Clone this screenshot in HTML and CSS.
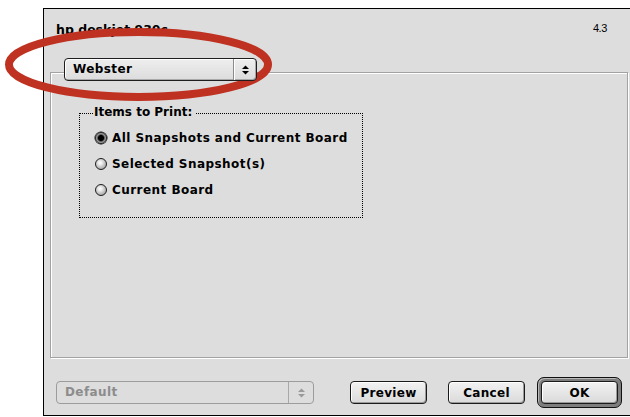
FILE: index.html
```html
<!DOCTYPE html>
<html lang="en">
<head>
<meta charset="utf-8">
<title>hp deskjet 930c</title>
<link rel="stylesheet" href="styles.css">
</head>
<body>
<div class="screen">
  <div class="window">
    <div class="head">
      <div class="title-row">
        <span class="title">hp deskjet 930c</span>
        <span class="version">4.3</span>
      </div>
      <div class="popup popup-main">
        <span class="popup-label">Webster</span>
        <span class="popup-arrows">
          <svg width="7" height="10" viewBox="0 0 7 10"><polygon points="0,4 3.5,0.5 7,4" fill="#000"/><polygon points="0,6 7,6 3.5,9.5" fill="#000"/></svg>
        </span>
      </div>
    </div>

    <div class="panel">
      <div class="group">
        <div class="group-title">Items to Print:</div>
        <div class="radio-list">
          <label class="radio-row"><span class="radio checked"></span><span class="radio-text">All Snapshots and Current Board</span></label>
          <label class="radio-row"><span class="radio"></span><span class="radio-text">Selected Snapshot(s)</span></label>
          <label class="radio-row"><span class="radio"></span><span class="radio-text">Current Board</span></label>
        </div>
      </div>
    </div>

    <div class="foot">
      <div class="popup popup-disabled">
        <span class="popup-label">Default</span>
        <span class="popup-arrows">
          <svg width="7" height="10" viewBox="0 0 7 10"><polygon points="0,4 3.5,0.5 7,4" fill="#9a9a9a"/><polygon points="0,6 7,6 3.5,9.5" fill="#9a9a9a"/></svg>
        </span>
      </div>
      <button class="btn btn-preview">Preview</button>
      <button class="btn btn-cancel">Cancel</button>
      <span class="default-ring"><button class="btn">OK</button></span>
    </div>
  </div>

  <!-- hand-drawn red circle marking the printer popup -->
  <svg class="mark" width="630" height="417" viewBox="0 0 630 417">
    <ellipse cx="138.5" cy="64.5" rx="129.5" ry="32.5" fill="none" stroke="#bf3120" stroke-width="8"/>
  </svg>
</div>
</body>
</html>
```
FILE: styles.css
```css
* { box-sizing: border-box; }

html, body {
  margin: 0;
  background: #fff;
}

body {
  font-family: "DejaVu Sans", "Liberation Sans", sans-serif;
  font-size: 12px;
  color: #000;
}

.screen {
  position: relative;
  width: 630px;
  height: 417px;
  overflow: hidden;
  background: #fff;
}

/* dialog window */
.window {
  margin: 8px 0 0 43px;
  width: 592px;
  height: 408px;
  border: 1px solid #000;
  border-right: none;
  background: #dddddd;
  display: flex;
  flex-direction: column;
}

.head {
  padding: 13px 28px 0 12px;
}

.title-row {
  display: flex;
  justify-content: space-between;
  align-items: flex-start;
  line-height: 15px;
}

.title {
  font-weight: bold;
  font-size: 12.5px;
}

.version {
  font-family: "Liberation Sans", sans-serif;
  font-size: 11px;
  line-height: 13px;
  letter-spacing: -0.4px;
}

/* popup menus */
.popup {
  display: flex;
  align-items: stretch;
  height: 23px;
  border-radius: 4px;
  font-weight: bold;
  letter-spacing: 0.4px;
}

.popup-main {
  position: relative;
  z-index: 1;
  width: 193px;
  margin: 21px 0 -9px 8px;
  border: 1px solid #1e1e1e;
  background: linear-gradient(#eeeeee, #dcdcdc);
  box-shadow: inset 1px 1px 0 #fff, inset -1px -1px 0 #a8a8a8;
}

.popup-label {
  flex: 1;
  padding-left: 8px;
  line-height: 21px;
}

.popup-arrows {
  width: 23px;
  display: flex;
  align-items: center;
  justify-content: center;
  border-left: 1px solid #8c8c8c;
  box-shadow: inset 1px 0 0 #fff;
}

.popup-disabled {
  width: 258px;
  border: 1px solid #9c9c9c;
  background: #dddddd;
  color: #8c8c8c;
}

.popup-disabled .popup-arrows {
  width: 25px;
  border-left-color: #a8a8a8;
  box-shadow: none;
}

/* etched content panel */
.panel {
  flex: none;
  height: 286px;
  margin: 0 7px 0 6px;
  padding: 40px 0 0 28px;
  border: 1px solid #a2a2a2;
  box-shadow: inset 1px 1px 0 #fff, 1px 1px 0 #fff;
  background: #dddddd;
}

.group {
  width: 284px;
  height: 105px;
  border: 1px dotted #000;
  padding: 0 0 0 15px;
}

.group-title {
  display: table;
  margin: -9px 0 0 -2px;
  padding: 0 4px 0 1px;
  background: #dddddd;
  font-weight: bold;
  line-height: 15px;
}

.radio-list {
  margin-top: 5px;
  display: flex;
  flex-direction: column;
}

.radio-row {
  display: flex;
  align-items: center;
  height: 26px;
  gap: 5px;
}

.radio {
  flex: none;
  width: 12px;
  height: 12px;
  border-radius: 50%;
  border: 1px solid #1e1e1e;
  background: radial-gradient(circle at 42% 38%, #ffffff 0, #ececec 22%, #b4b4b4 65%, #8a8a8a 100%);
}

.radio.checked {
  background: radial-gradient(circle, #000 0, #000 2.6px, #444 3.2px, #8a8a8a 4px, #b0b0b0 5px);
  box-shadow: 0 0 0 0.5px #000;
}

.radio-text {
  font-weight: bold;
  letter-spacing: 0.45px;
  line-height: 15px;
}

/* bottom button bar */
.foot {
  display: flex;
  align-items: center;
  padding: 19px 0 0 12px;
}

.btn {
  width: 77px;
  height: 23px;
  padding: 0;
  border: 1px solid #1a1a1a;
  border-radius: 4px;
  background: linear-gradient(#f2f2f2, #dadada);
  box-shadow: inset 1px 1px 0 #fff, inset -1px -1px 0 #9a9a9a;
  font-family: "DejaVu Sans", sans-serif;
  font-weight: bold;
  font-size: 12px;
  letter-spacing: 0.3px;
  color: #000;
}

.btn-preview { margin-left: 36px; }
.btn-cancel { margin-left: 21px; }

.default-ring {
  display: flex;
  margin-left: 12px;
  padding: 3px;
  border: 1px solid #111;
  border-radius: 7px;
  background: #7e7e7e;
  box-shadow: inset 1px 1px 0 #b8b8b8;
}

/* annotation overlay */
.mark {
  position: absolute;
  left: 0;
  top: 0;
  pointer-events: none;
}
```
